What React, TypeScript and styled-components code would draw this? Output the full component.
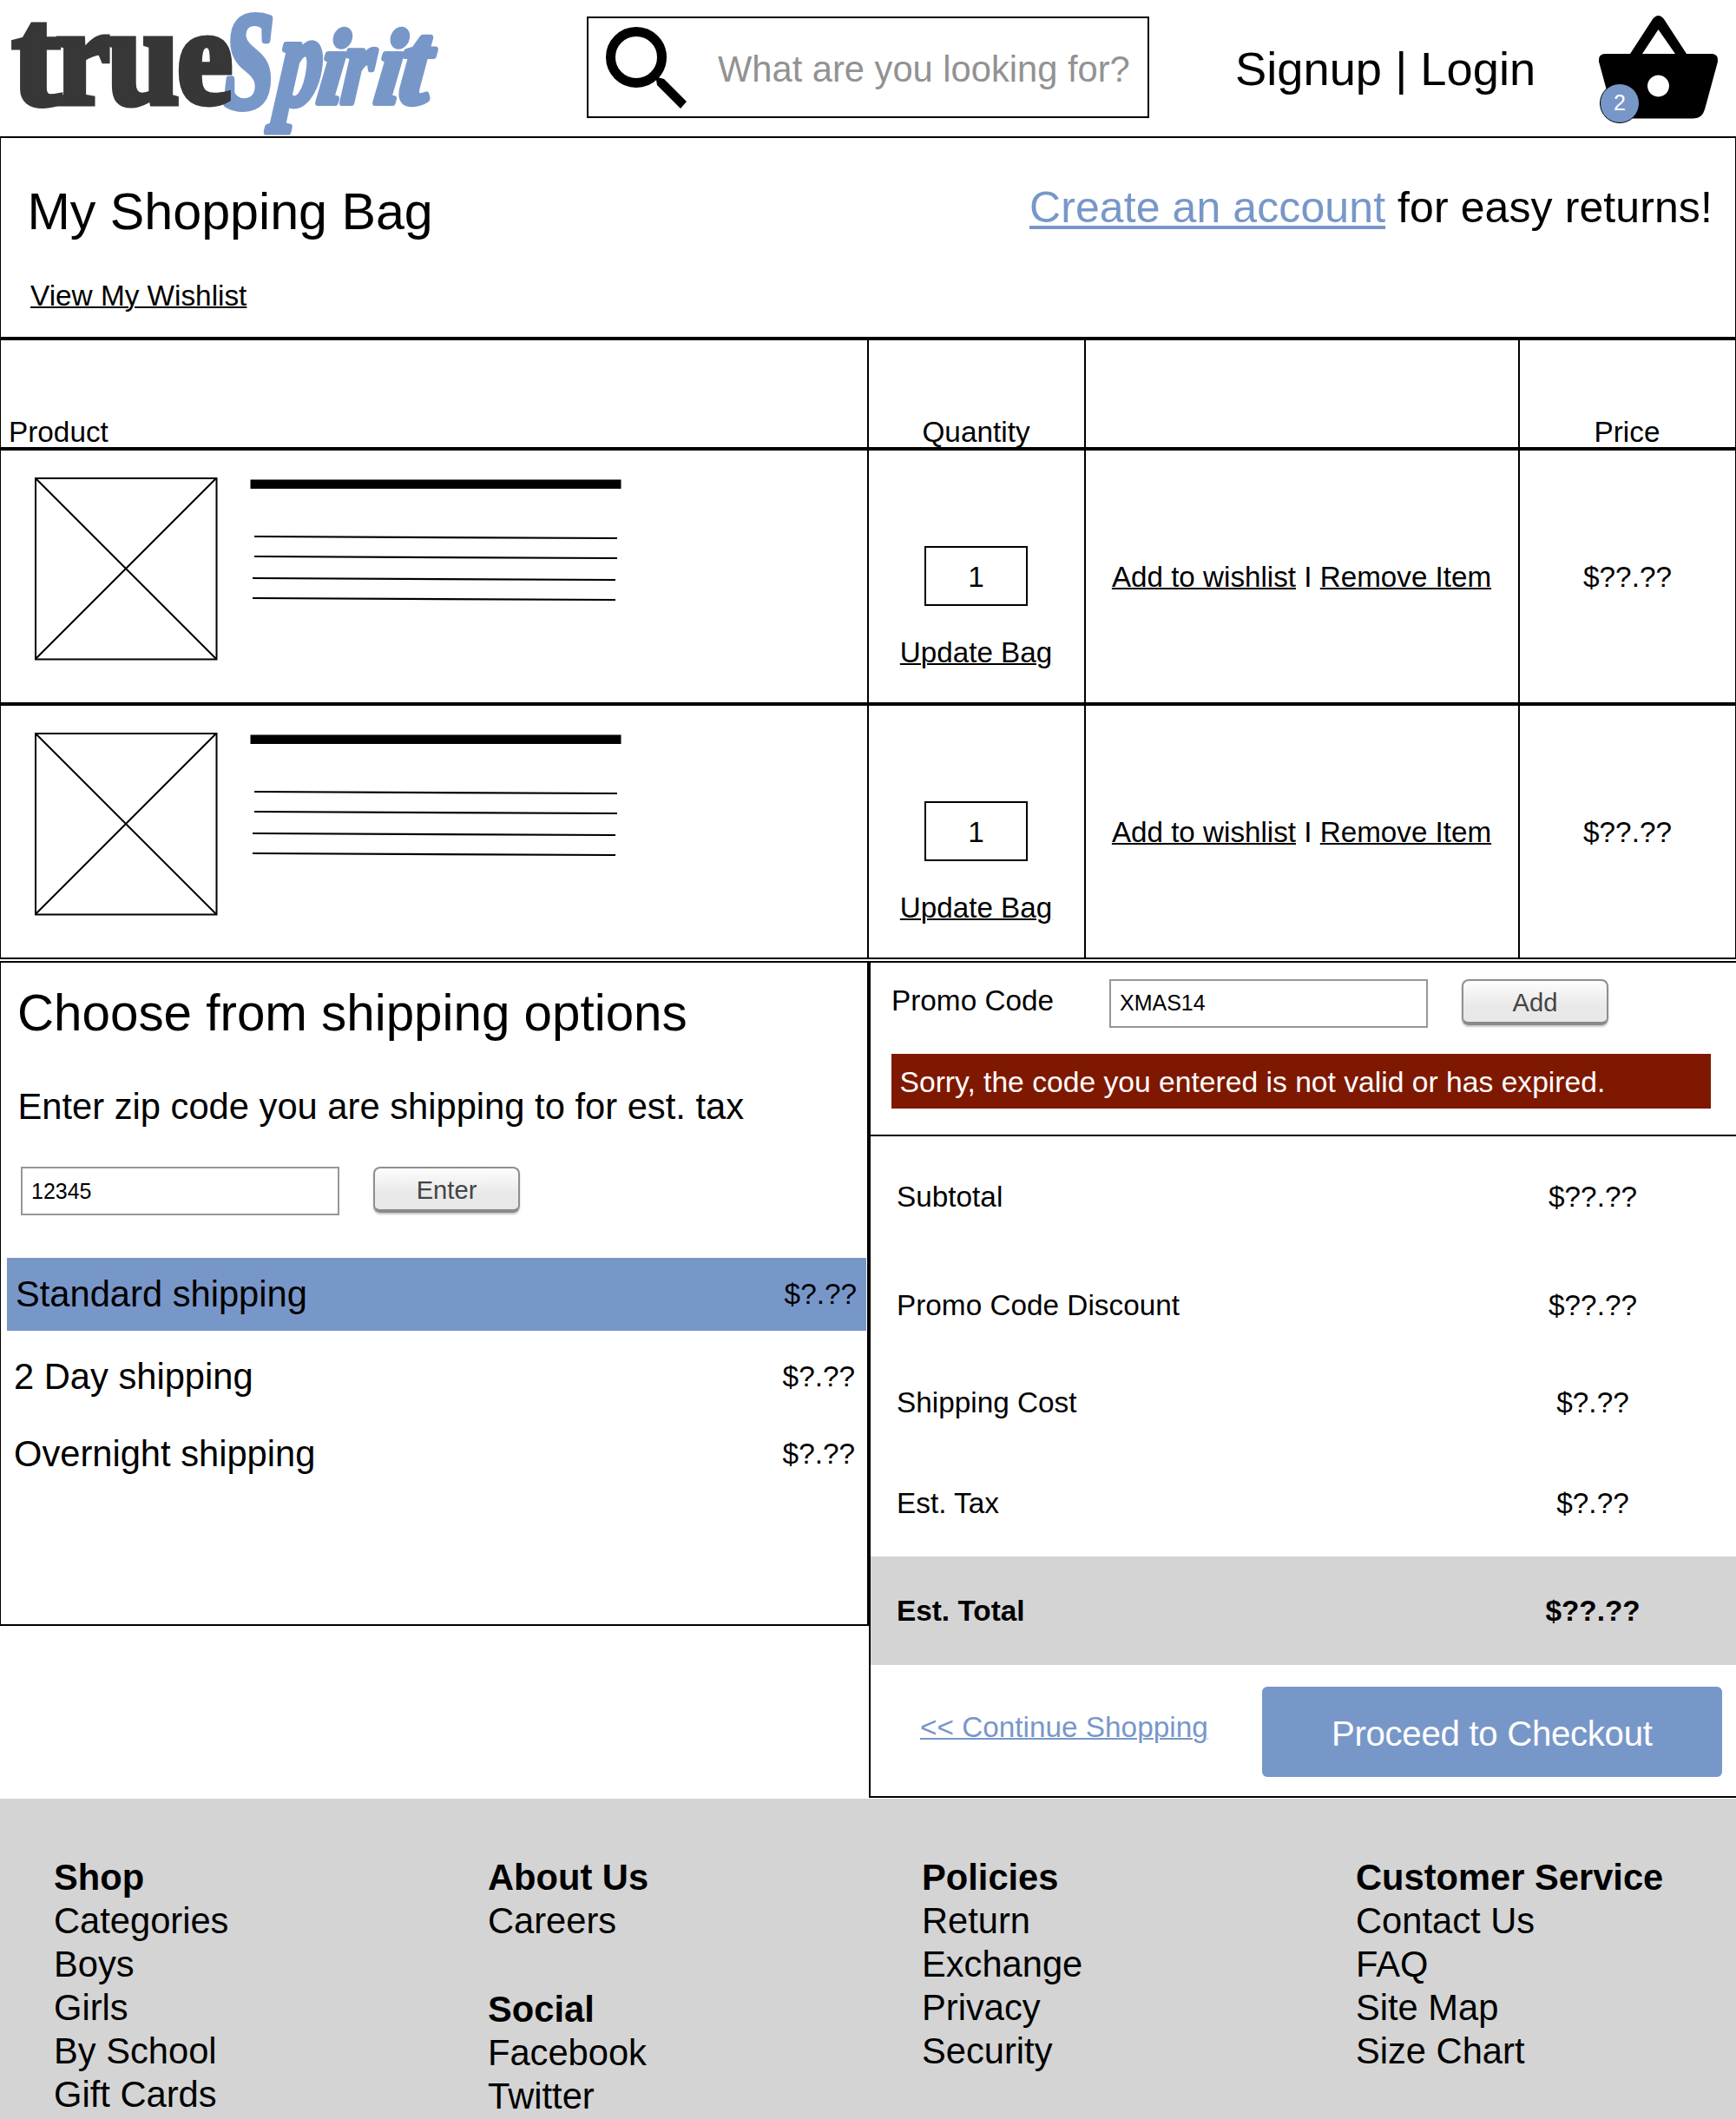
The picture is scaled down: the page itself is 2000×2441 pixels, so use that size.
import React from "react";
import styled, { createGlobalStyle } from "styled-components";

const BLUE = "#7897c9";
const GREY = "#d4d4d4";

const GlobalStyle = createGlobalStyle`
  *, *::before, *::after { box-sizing: border-box; }
  body {
    margin: 0;
    background: #fff;
    color: #000;
    font-family: "Liberation Sans", Arial, Helvetica, sans-serif;
    font-size: 33.33px;
  }
  a { color: inherit; }
  h1, h2, h3, p, ul { margin: 0; padding: 0; font-weight: normal; }
  button, input { font-family: inherit; }
`;

const Page = styled.div`
  width: 2000px;
  height: 2441px;
  overflow: hidden;
  display: flex;
  flex-direction: column;
`;

/* ---------- header ---------- */

const Header = styled.header`
  display: flex;
  align-items: flex-start;
  flex: none;
  height: 157px;
`;

const LogoArt = styled.svg`
  flex: none;
  display: block;
  width: 520px;
  height: 157px;
  overflow: visible;
`;

const SearchBox = styled.label`
  display: flex;
  align-items: center;
  flex: none;
  width: 648px;
  height: 117px;
  margin: 19px 0 0 156px;
  padding-left: 18px;
  border: 2px solid #000;
`;

const SearchArt = styled.svg`
  flex: none;
  width: 100px;
  height: 100px;
`;

const SearchInput = styled.input`
  flex: 1;
  min-width: 0;
  height: 60px;
  margin: 4px 0 0 31px;
  padding: 0;
  border: 0;
  outline: 0;
  background: transparent;
  font-size: 41.67px;
  &::placeholder { color: #929292; opacity: 1; }
`;

const AccountLinks = styled.nav`
  flex: none;
  width: 412px;
  margin: 50px 0 0 99px;
  font-size: 54.3px;
  line-height: 60px;
  white-space: pre;
`;

const BasketButton = styled.div`
  position: relative;
  flex: none;
  width: 150px;
  height: 150px;
`;

const BasketArt = styled.svg`
  display: block;
  width: 150px;
  height: 150px;
`;

const Badge = styled.span`
  position: absolute;
  left: 8px;
  top: 95.5px;
  width: 46px;
  height: 46px;
  border: 1.5px solid #000;
  border-radius: 50%;
  background: ${BLUE};
  color: #fff;
  font-size: 25px;
  line-height: 43px;
  text-align: center;
`;

/* ---------- bag ---------- */

const Bag = styled.main`
  flex: none;
  border: solid #000;
  border-width: 2px 1px;
`;

const Intro = styled.section`
  display: flex;
  height: 229px;
`;

const IntroMain = styled.div`
  width: 1185px;
  padding: 55px 0 0 28px;
`;

const Title = styled.h1`
  padding-left: 2.5px;
  font-size: 59.2px;
  line-height: 60px;
`;

const WishlistLink = styled.a`
  display: inline-block;
  margin: 46.5px 0 0 6px;
  font-size: 33.33px;
  line-height: 40px;
  text-decoration: underline;
  text-decoration-thickness: 2px;
`;

const Signup = styled.p`
  padding-top: 50px;
  font-size: 50px;
  line-height: 60px;
  letter-spacing: 0.09px;
  white-space: nowrap;
`;

const AccentLink = styled.a`
  color: ${BLUE};
  text-decoration: underline;
  text-decoration-thickness: 4px;
  text-underline-offset: 4px;
`;

const Row = styled.div<{ $h: number; $last?: boolean }>`
  display: grid;
  grid-template-columns: 998px 250px 500px 250px;
  height: ${(p) => p.$h}px;
  box-sizing: content-box;
  border-bottom: ${(p) => (p.$last ? 0 : 4)}px solid #000;
`;

const HeadRow = styled(Row)`
  border-top: 4px solid #000;
`;

const Cell = styled.div`
  display: flex;
  align-items: center;
  justify-content: center;
  padding-top: 2px;
  border-left: 2px solid #000;
  white-space: pre;
`;

const ActionCell = styled(Cell)`
  padding-right: 1px;
`;

const ProductCell = styled.div`
  display: flex;
  align-items: flex-start;
  padding: 30px 0 0 38px;
`;

const HeadCell = styled(Cell)`
  align-items: flex-end;
  padding: 0 1px 0 0;
  line-height: 34px;
`;

const HeadProduct = styled.div`
  display: flex;
  align-items: flex-end;
  padding-left: 9px;
  line-height: 34px;
`;

const Thumb = styled.svg`
  flex: none;
  width: 212px;
  height: 212px;
`;

const Description = styled.svg`
  flex: none;
  width: 440px;
  height: 160px;
  margin-left: 32px;
`;

const QuantityCell = styled(Cell)`
  flex-direction: column;
  justify-content: flex-start;
  padding: 110px 1px 0 0;
`;

const QuantityBox = styled.div`
  width: 119px;
  height: 69px;
  border: 2px solid #000;
  line-height: 67px;
  text-align: center;
`;

const Link = styled.a<{ $gap?: number }>`
  margin-top: ${(p) => p.$gap ?? 0}px;
  font-size: 33.2px;
  line-height: 40px;
  text-decoration: underline;
  text-decoration-thickness: 2px;
`;

/* ---------- panels ---------- */

const Panels = styled.div`
  display: flex;
  align-items: flex-start;
  flex: none;
  height: 965px;
  margin-top: 2px;
`;

const ShippingPanel = styled.section`
  width: 1001px;
  height: 766px;
  padding-top: 28px;
  border: 2px solid #000;
  border-left-width: 1px;
`;

const PanelTitle = styled.h2`
  padding-left: 19px;
  font-size: 58.33px;
  line-height: 60px;
`;

const PanelText = styled.p`
  padding-left: 19.5px;
  margin-top: 52.5px;
  font-size: 41.7px;
  line-height: 50px;
`;

const ZipForm = styled.div`
  display: flex;
  margin: 44.5px 0 48.5px 23px;
  height: 56px;
`;

const TextField = styled.input`
  flex: none;
  width: 367px;
  height: 56px;
  padding: 0 0 0 10px;
  border: 2px solid #979797;
  border-radius: 0;
  outline: 0;
  background: #fff;
  color: #000;
  font-size: 25px;
`;

const SmallButton = styled.button`
  flex: none;
  width: 169px;
  height: 53px;
  margin-left: 39px;
  padding: 3px 0 0;
  border: 2px solid #8f8f8f;
  border-bottom: 4px solid #8a8a8a;
  border-radius: 8px;
  background: linear-gradient(#fdfdfd, #e9e9e9 60%, #e8e8e8);
  box-shadow: 0 2px 2px rgba(0, 0, 0, 0.22);
  color: #444;
  font-size: 29.17px;
  line-height: 44px;
`;

const Option = styled.div<{ $selected?: boolean }>`
  display: flex;
  align-items: center;
  justify-content: space-between;
  height: ${(p) => (p.$selected ? 84 : 89.5)}px;
  margin: ${(p) => (p.$selected ? "0 1px 8px 7px" : "0 3px 0 5px")};
  padding: 1px 11px 0 10px;
  background: ${(p) => (p.$selected ? BLUE : "transparent")};
`;

const OptionName = styled.span`
  font-size: 41.67px;
`;

const SummaryPanel = styled.section`
  width: 999px;
  height: 964px;
  border: 2px solid #000;
  border-right: 0;
`;

const Promo = styled.div`
  height: 199.5px;
  padding: 18.5px 0 0 24px;
  border-bottom: 2px solid #000;
`;

const PromoForm = styled.div`
  display: flex;
  height: 56px;
`;

const PromoLabel = styled.span`
  width: 251px;
  line-height: 50px;
`;

const ErrorBar = styled.p`
  width: 944px;
  height: 63px;
  margin-top: 30px;
  padding-left: 9.5px;
  background: #7f1800;
  color: #fff;
  font-size: 33.65px;
  line-height: 66px;
`;

const Totals = styled.div`
  padding-top: 7px;
`;

const TotalRow = styled.div<{ $h: number; $gap?: number; $strong?: boolean }>`
  display: grid;
  grid-template-columns: 667px 328px;
  align-items: center;
  height: ${(p) => p.$h}px;
  margin-top: ${(p) => p.$gap ?? 0}px;
  padding: 2px 0 0 1px;
  font-weight: ${(p) => (p.$strong ? "bold" : "normal")};
  background: ${(p) => (p.$strong ? GREY : "transparent")};
`;

const TotalName = styled.span`
  padding-left: 29px;
`;

const TotalValue = styled.span`
  text-align: center;
`;

const Actions = styled.div`
  display: flex;
  align-items: flex-start;
  padding: 25.5px 0 0 57px;
`;

const ContinueLink = styled.a`
  width: 394px;
  margin-top: 27px;
  color: ${BLUE};
  line-height: 40px;
  text-decoration: underline;
  text-decoration-thickness: 2px;
  white-space: nowrap;
`;

const Checkout = styled.button`
  width: 529.5px;
  height: 104px;
  padding: 5px 0 0;
  border: 0;
  border-radius: 6px;
  background: ${BLUE};
  color: #fff;
  font-size: 40.2px;
  letter-spacing: -0.3px;
`;

/* ---------- footer ---------- */

const Footer = styled.footer`
  display: grid;
  grid-template-columns: repeat(4, 500px);
  flex: 1;
  padding: 66px 0 0 62px;
  background: ${GREY};
  font-size: 41.67px;
  line-height: 50px;
`;

const FooterGroup = styled.div`
  & + & { margin-top: 51.5px; }
`;

const FooterTitle = styled.h3`
  font-size: inherit;
  font-weight: bold;
`;

const FooterList = styled.ul`
  list-style: none;
`;

const Logo = () => (
  <LogoArt viewBox="0 0 520 157" role="img" aria-label="trueSpirit">
    <g
      fill={BLUE}
      stroke={BLUE}
      strokeWidth="8"
      strokeLinejoin="round"
      fontFamily='"Liberation Serif", serif'
      fontStyle="italic"
      fontWeight="bold"
    >
      <text transform="translate(258 123) scale(0.66 1)" fontSize="158">S</text>
      <text transform="translate(317 120) skewX(-6) scale(0.68 1)" fontSize="148">p</text>
      <text transform="translate(364 118) skewX(-8) scale(0.86 1)" fontSize="120">i</text>
      <text transform="translate(392 118) skewX(-6) scale(0.7 1)" fontSize="128">r</text>
      <text transform="translate(430 118) skewX(-8) scale(0.86 1)" fontSize="120">i</text>
      <text transform="translate(458 118) skewX(-6) scale(0.92 1)" fontSize="132">t</text>
    </g>
    <g
      fill="#373737"
      stroke="#373737"
      strokeWidth="7"
      fontFamily='"Liberation Serif", serif'
      fontWeight="bold"
    >
      <text transform="translate(14 120) scale(1.03 1)" fontSize="162">t</text>
      <text transform="translate(64 119) scale(0.88 1)" fontSize="160">r</text>
      <text transform="translate(123 119) scale(0.94 1)" fontSize="160">u</text>
      <text transform="translate(204 119) scale(0.9 1)" fontSize="160">e</text>
    </g>
  </LogoArt>
);

const SearchIcon = () => (
  <SearchArt viewBox="0 0 100 100" aria-hidden="true">
    <circle cx="37" cy="38" r="29.5" fill="none" stroke="#000" strokeWidth="11" />
    <path d="M57 60 L62 61 L69 63 L95 89 L88 97 L61 70 L60 64 Z" fill="#000" />
  </SearchArt>
);

const BasketIcon = () => (
  <BasketArt viewBox="0 0 150 150" aria-hidden="true">
    <path
      fillRule="evenodd"
      d="M43 62 L69 22 Q75.500 14 82 22 L108 62 H138 Q145 63 144 71 L129 126 Q126 136.500 116 136.500 H35 Q25 136.500 22 126 L7 71 Q6 63 13 62 Z M57 62 H95 L75.500 34 Z M75.500 86.500 a12.500 12.500 0 1 0 0.010 0 Z"
    />
  </BasketArt>
);

const ProductRow = ({ last }: { last?: boolean }) => (
  <Row $h={290} $last={last}>
    <ProductCell>
      <Thumb viewBox="0 0 212 212" fill="none" stroke="#000" strokeWidth="2">
        <rect x="2" y="2" width="208.5" height="208.5" />
        <path d="M2 2 L210 210 M210 2 L2 210" />
      </Thumb>
      <Description viewBox="0 0 440 160" stroke="#000" strokeWidth="2.200" fill="none">
        <path d="M5.500 8.800 H432.500" strokeWidth="10.500" />
        <path d="M10 69 L428 71 M10 92 L428 94 M8 117 L426 119 M8 140 L426 142" />
      </Description>
    </ProductCell>
    <QuantityCell>
      <QuantityBox>1</QuantityBox>
      <Link $gap={34}>Update Bag</Link>
    </QuantityCell>
    <ActionCell>
      <Link>Add to wishlist</Link> I <Link>Remove Item</Link>
    </ActionCell>
    <Cell>$??.??</Cell>
  </Row>
);

const footer = [
  [{ title: "Shop", items: ["Categories", "Boys", "Girls", "By School", "Gift Cards"] }],
  [
    { title: "About Us", items: ["Careers"] },
    { title: "Social", items: ["Facebook", "Twitter"] },
  ],
  [{ title: "Policies", items: ["Return", "Exchange", "Privacy", "Security"] }],
  [{ title: "Customer Service", items: ["Contact Us", "FAQ", "Site Map", "Size Chart"] }],
];

export default function App() {
  return (
    <Page>
      <GlobalStyle />
      <Header>
        <Logo />
        <SearchBox>
          <SearchIcon />
          <SearchInput placeholder="What are you looking for?" />
        </SearchBox>
        <AccountLinks>Signup | Login</AccountLinks>
        <BasketButton>
          <BasketIcon />
          <Badge>2</Badge>
        </BasketButton>
      </Header>

      <Bag>
        <Intro>
          <IntroMain>
            <Title>My Shopping Bag</Title>
            <WishlistLink>View My Wishlist</WishlistLink>
          </IntroMain>
          <Signup>
            <AccentLink>Create an account</AccentLink> for easy returns!
          </Signup>
        </Intro>
        <HeadRow $h={123}>
          <HeadProduct>Product</HeadProduct>
          <HeadCell>Quantity</HeadCell>
          <HeadCell />
          <HeadCell>Price</HeadCell>
        </HeadRow>
        <ProductRow />
        <ProductRow last />
      </Bag>

      <Panels>
        <ShippingPanel>
          <PanelTitle>Choose from shipping options</PanelTitle>
          <PanelText>Enter zip code you are shipping to for est. tax</PanelText>
          <ZipForm>
            <TextField defaultValue="12345" />
            <SmallButton>Enter</SmallButton>
          </ZipForm>
          <Option $selected>
            <OptionName>Standard shipping</OptionName>
            <span>$?.??</span>
          </Option>
          <Option>
            <OptionName>2 Day shipping</OptionName>
            <span>$?.??</span>
          </Option>
          <Option>
            <OptionName>Overnight shipping</OptionName>
            <span>$?.??</span>
          </Option>
        </ShippingPanel>

        <SummaryPanel>
          <Promo>
            <PromoForm>
              <PromoLabel>Promo Code</PromoLabel>
              <TextField defaultValue="XMAS14" />
              <SmallButton>Add</SmallButton>
            </PromoForm>
            <ErrorBar>Sorry, the code you entered is not valid or has expired.</ErrorBar>
          </Promo>
          <Totals>
            <TotalRow $h={125}>
              <TotalName>Subtotal</TotalName>
              <TotalValue>$??.??</TotalValue>
            </TotalRow>
            <TotalRow $h={125}>
              <TotalName>Promo Code Discount</TotalName>
              <TotalValue>$??.??</TotalValue>
            </TotalRow>
            <TotalRow $h={99}>
              <TotalName>Shipping Cost</TotalName>
              <TotalValue>$?.??</TotalValue>
            </TotalRow>
            <TotalRow $h={123} $gap={5}>
              <TotalName>Est. Tax</TotalName>
              <TotalValue>$?.??</TotalValue>
            </TotalRow>
            <TotalRow $h={125} $strong>
              <TotalName>Est. Total</TotalName>
              <TotalValue>$??.??</TotalValue>
            </TotalRow>
          </Totals>
          <Actions>
            <ContinueLink>&lt;&lt; Continue Shopping</ContinueLink>
            <Checkout>Proceed to Checkout</Checkout>
          </Actions>
        </SummaryPanel>
      </Panels>

      <Footer>
        {footer.map((column, i) => (
          <div key={i}>
            {column.map((group) => (
              <FooterGroup key={group.title}>
                <FooterTitle>{group.title}</FooterTitle>
                <FooterList>
                  {group.items.map((item) => (
                    <li key={item}>{item}</li>
                  ))}
                </FooterList>
              </FooterGroup>
            ))}
          </div>
        ))}
      </Footer>
    </Page>
  );
}
